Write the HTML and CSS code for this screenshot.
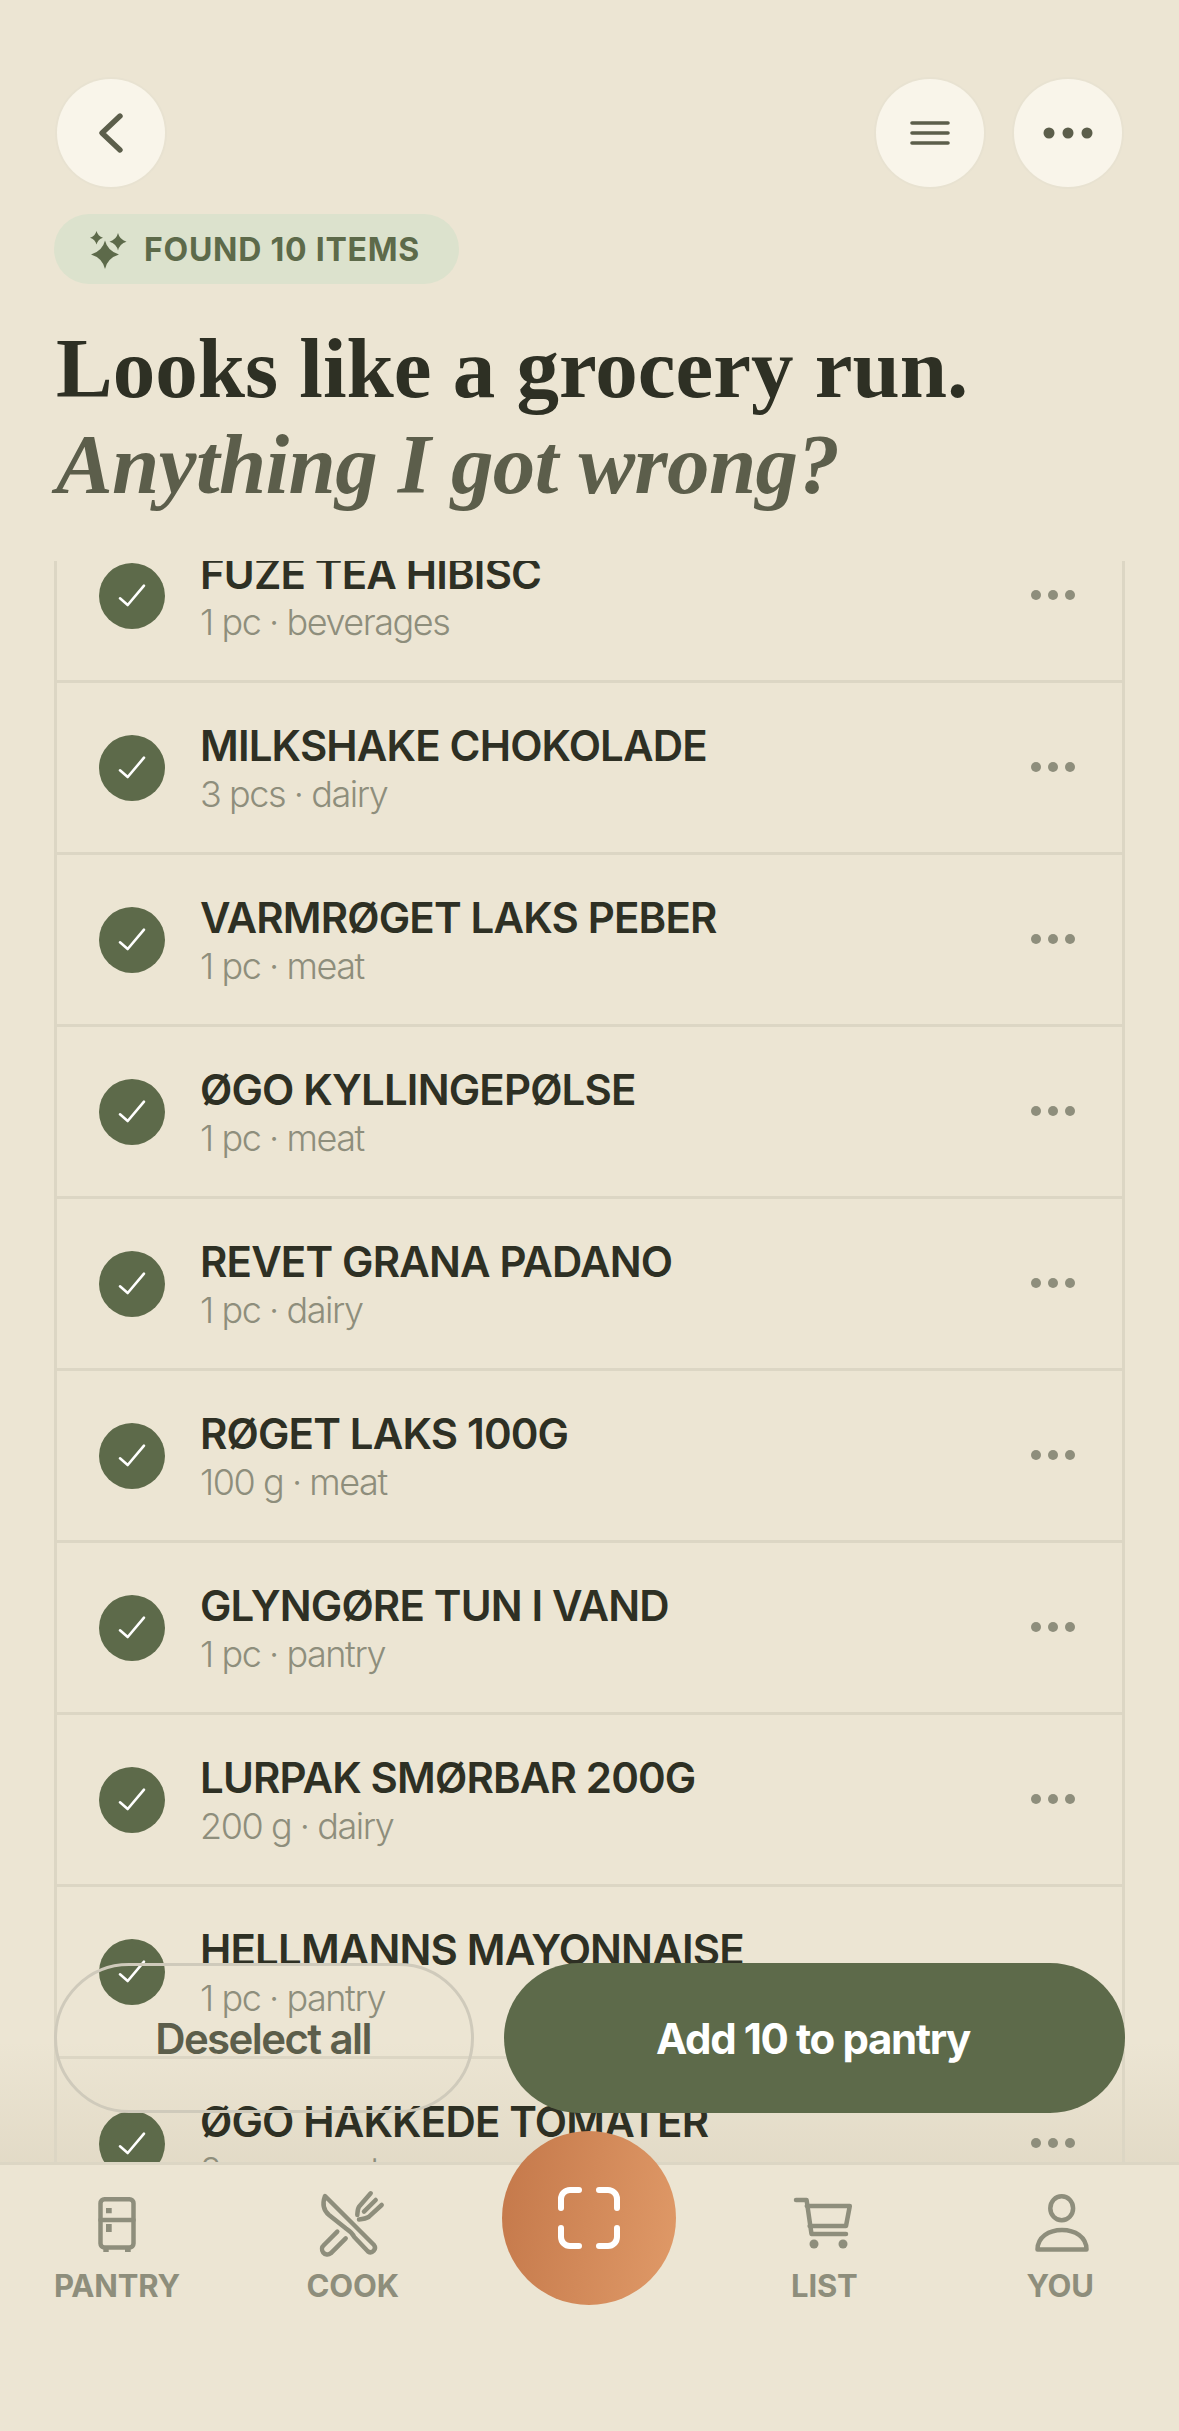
FILE: index.html
```html
<!DOCTYPE html>
<html lang="en">
<head>
<meta charset="utf-8">
<title>Found items</title>
<link rel="stylesheet" href="styles.css">
</head>
<body>
<div class="app">
  <header class="head">
    <div class="topbar">
      <button class="round"><svg class="round-ic" viewBox="0 0 108 108"><path d="M63 37 45 54 63 71" class="ic-stroke"/></svg></button>
      <div class="top-right">
        <button class="round"><svg class="round-ic" viewBox="0 0 108 108"><path d="M36 44H72M36 54H72M36 64H72" class="ic-thin"/></svg></button>
        <button class="round"><svg class="round-ic" viewBox="0 0 108 108"><circle cx="35" cy="54" r="5.5" class="ic-fill"/><circle cx="54" cy="54" r="5.5" class="ic-fill"/><circle cx="73" cy="54" r="5.5" class="ic-fill"/></svg></button>
      </div>
    </div>
    <div class="badge">
      <svg class="badge-ic" viewBox="0 0 40 40"><path d="M17 11.500Q19.500 22 31 25.500 19.500 29 17 40 14.500 29 3 25.500 14.500 22 17 11.500Z" class="spark"/><path d="M8.500 2Q9.800 7 15 8.700 9.800 10.400 8.500 15.400 7.200 10.400 2 8.700 7.200 7 8.500 2Z" class="spark"/><path d="M30 4Q31.500 10.500 38.500 12.700 31.500 14.900 30 21.500 28.500 14.900 21.500 12.700 28.500 10.500 30 4Z" class="spark"/></svg>
      <span>FOUND 10 ITEMS</span>
    </div>
    <h1 class="title">Looks like a grocery run.<em class="title-em">Anything I got wrong?</em></h1>
  </header>

  <main class="main">
    <div class="fade"></div>
    <div class="clip">
      <ul class="list">
        <li class="row"><span class="check"><svg viewBox="0 0 66 66"><path d="M21 35.300 28.700 42 45 22.700"/></svg></span><div class="info"><div class="name">FUZE TEA HIBISC</div><div class="sub">1 pc · beverages</div></div><span class="more"><i></i><i></i><i></i></span></li>
        <li class="row"><span class="check"><svg viewBox="0 0 66 66"><path d="M21 35.300 28.700 42 45 22.700"/></svg></span><div class="info"><div class="name">MILKSHAKE CHOKOLADE</div><div class="sub">3 pcs · dairy</div></div><span class="more"><i></i><i></i><i></i></span></li>
        <li class="row"><span class="check"><svg viewBox="0 0 66 66"><path d="M21 35.300 28.700 42 45 22.700"/></svg></span><div class="info"><div class="name">VARMRØGET LAKS PEBER</div><div class="sub">1 pc · meat</div></div><span class="more"><i></i><i></i><i></i></span></li>
        <li class="row"><span class="check"><svg viewBox="0 0 66 66"><path d="M21 35.300 28.700 42 45 22.700"/></svg></span><div class="info"><div class="name">ØGO KYLLINGEPØLSE</div><div class="sub">1 pc · meat</div></div><span class="more"><i></i><i></i><i></i></span></li>
        <li class="row"><span class="check"><svg viewBox="0 0 66 66"><path d="M21 35.300 28.700 42 45 22.700"/></svg></span><div class="info"><div class="name">REVET GRANA PADANO</div><div class="sub">1 pc · dairy</div></div><span class="more"><i></i><i></i><i></i></span></li>
        <li class="row"><span class="check"><svg viewBox="0 0 66 66"><path d="M21 35.300 28.700 42 45 22.700"/></svg></span><div class="info"><div class="name">RØGET LAKS 100G</div><div class="sub">100 g · meat</div></div><span class="more"><i></i><i></i><i></i></span></li>
        <li class="row"><span class="check"><svg viewBox="0 0 66 66"><path d="M21 35.300 28.700 42 45 22.700"/></svg></span><div class="info"><div class="name">GLYNGØRE TUN I VAND</div><div class="sub">1 pc · pantry</div></div><span class="more"><i></i><i></i><i></i></span></li>
        <li class="row"><span class="check"><svg viewBox="0 0 66 66"><path d="M21 35.300 28.700 42 45 22.700"/></svg></span><div class="info"><div class="name">LURPAK SMØRBAR 200G</div><div class="sub">200 g · dairy</div></div><span class="more"><i></i><i></i><i></i></span></li>
        <li class="row"><span class="check"><svg viewBox="0 0 66 66"><path d="M21 35.300 28.700 42 45 22.700"/></svg></span><div class="info"><div class="name">HELLMANNS MAYONNAISE</div><div class="sub">1 pc · pantry</div></div><span class="more"><i></i><i></i><i></i></span></li>
        <li class="row"><span class="check"><svg viewBox="0 0 66 66"><path d="M21 35.300 28.700 42 45 22.700"/></svg></span><div class="info"><div class="name">ØGO HAKKEDE TOMATER</div><div class="sub">2 pcs · pantry</div></div><span class="more"><i></i><i></i><i></i></span></li>
      </ul>
    </div>
    <div class="actions">
      <button class="btn btn-ghost">Deselect all</button>
      <button class="btn btn-primary">Add 10 to pantry</button>
    </div>
  </main>

  <nav class="nav">
    <div class="tab">
      <svg class="tab-ic" viewBox="0 0 78 78"><rect x="22.500" y="15.200" width="33" height="48.300" rx="4" class="ln"/><path d="M22.500 36H55.500" class="ln"/><path d="M28 24h5.700v5.300H28zM28 40h5.700v8H28zM25.300 65h5.400v3h-5.400zM47 65h5.700v3H47z" class="tab-fill"/></svg>
      <span class="tab-label">PANTRY</span>
    </div>
    <div class="tab">
      <svg class="tab-ic" viewBox="0 0 78 78"><path d="M11 12 60 61A4.500 4.500 0 0 1 54 67.500L40 52.700C38 48 35 46.500 31.700 44.300L15 31C9 26 8.500 19 11 12Z" class="ln"/><path d="M23.300 47.700 10 61A4.700 4.700 0 0 0 16.700 69.300L31.700 54.300" class="ln"/><path d="M56.700 9.300 45 22.700C43.500 25 43.500 28 43.300 31M61.700 16 50 27.700M67.700 21 55 32.700C52 34.500 49 35 45 35.500" class="ln"/></svg>
      <span class="tab-label">COOK</span>
    </div>
    <div class="tab tab-fab">
      <button class="fab"><svg class="fab-ic" viewBox="0 0 72 72"><path d="M8 26V17a9 9 0 0 1 9-9h9M46 8h9a9 9 0 0 1 9 9v9M64 46v9a9 9 0 0 1-9 9h-9M26 64h-9a9 9 0 0 1-9-9v-9"/></svg></button>
    </div>
    <div class="tab">
      <svg class="tab-ic" viewBox="0 0 78 78"><path d="M11 16H21.600L26.500 50H61M21.800 22H64.800L61 42H24.600" class="ln"/><circle cx="29" cy="60" r="4.500" class="tab-fill"/><circle cx="58" cy="60" r="4.500" class="tab-fill"/></svg>
      <span class="tab-label">LIST</span>
    </div>
    <div class="tab">
      <svg class="tab-ic" viewBox="0 0 78 78"><ellipse cx="40.700" cy="24.300" rx="11.400" ry="12" class="ln"/><path d="M16.500 65.500C16.500 53 28 46 41 46S65.500 53 65.500 65.500Z" class="ln"/></svg>
      <span class="tab-label">YOU</span>
    </div>
  </nav>
</div>
</body>
</html>
```
FILE: styles.css
```css
* { box-sizing: border-box; margin: 0; padding: 0; }
html, body { width: 1179px; height: 2431px; overflow: hidden; }
body { background: #ece5d3; font-family: Inter, "Liberation Sans", sans-serif; color: #2e3024; }
.app { width: 1179px; height: 2431px; display: flex; flex-direction: column; }

.head { padding: 79px 57px 0 54px; height: 561px; flex: none; }
.topbar { display: flex; justify-content: space-between; padding-left: 3px; }
.top-right { display: flex; gap: 30px; }
.round { width: 108px; height: 108px; border-radius: 50%; background: #f9f5ea; border: 0; box-shadow: 0 0 0 2px #e8e2d1; display: flex; }
.round-ic { width: 108px; height: 108px; }
.ic-stroke { fill: none; stroke: #5c5e4b; stroke-width: 5.4; stroke-linecap: round; stroke-linejoin: round; }
.ic-thin { fill: none; stroke: #5c5e4b; stroke-width: 3.6; stroke-linecap: round; }
.ic-fill { fill: #5c5e4b; }

.badge { margin-top: 27px; height: 70px; width: 405px; border-radius: 35px; background: #dce2cd; display: flex; align-items: center; gap: 16px; padding-left: 34px; color: #5d6a4a; font-size: 32px; font-weight: 700; letter-spacing: 0.75px; }
.badge-ic { width: 40px; height: 40px; flex: none; }
.spark { fill: #5d6a4a; }

.title { margin-top: 36px; padding-left: 2px; font-family: "Liberation Serif", serif; font-weight: 700; font-size: 85px; line-height: 96px; color: #2e3024; }
.title-em { display: block; font-style: italic; color: #5c5e4b; letter-spacing: -0.6px; }

.main { flex: 1; min-height: 0; position: relative; }
.fade { position: absolute; left: 0; right: 0; bottom: 0; height: 120px; background: linear-gradient(to bottom, rgba(224,216,196,0), rgba(224,216,196,0.8)); }
.clip { position: relative; height: 100%; margin: 0 54px; overflow: hidden; border-left: 3px solid #dcd6c4; border-right: 3px solid #dcd6c4; }
.list { list-style: none; margin-top: -50px; }
.row { height: 172px; border-bottom: 3px solid #dcd6c4; display: flex; align-items: center; padding: 0 47px 0 42px; }
.check { width: 66px; height: 66px; border-radius: 50%; background: #5d6a4a; flex: none; display: flex; }
.check svg { width: 66px; height: 66px; fill: none; stroke: #fff; stroke-width: 2.6; stroke-linecap: round; stroke-linejoin: round; }
.info { flex: 1; margin-left: 35px; min-width: 0; padding-top: 3px; }
.name { font-size: 42px; line-height: 50px; font-weight: 600; letter-spacing: -0.84px; color: #2e3024; white-space: nowrap; }
.sub { font-size: 36px; line-height: 46px; font-weight: 300; color: #8e8e7c; letter-spacing: -1.44px; white-space: nowrap; }
.more { display: flex; gap: 7px; flex: none; padding-bottom: 2px; }
.more i { width: 10px; height: 10px; border-radius: 50%; background: #8e8e7c; }

.actions { position: absolute; left: 54px; right: 54px; bottom: 49px; display: flex; gap: 30px; }
.btn { height: 150px; border-radius: 75px; font-family: Inter, "Liberation Sans", sans-serif; font-size: 42px; }
.btn-ghost { width: 420px; background: transparent; border: 3px solid #cfcabb; color: #5c5e4b; font-weight: 600; letter-spacing: -1.6px; padding-right: 2px; }
.btn-primary { flex: 1; background: #5d6a4a; border: 0; color: #fff; font-weight: 700; letter-spacing: -1.4px; padding-right: 3px; }

.nav { flex: none; height: 269px; border-top: 3px solid #dcd6c4; display: grid; grid-template-columns: repeat(5, 1fr); background: #ece5d3; padding-top: 19px; position: relative; }
.tab { display: flex; flex-direction: column; align-items: center; padding-right: 2px; }
.tab-fab { padding-right: 0; }
.tab-ic { width: 78px; height: 78px; }
.ln { fill: none; stroke: #8e8e7c; stroke-width: 4.5; stroke-linecap: round; stroke-linejoin: round; }
.tab-fill { fill: #8e8e7c; }
.tab-label { margin-top: 4px; font-size: 31px; line-height: 40px; font-weight: 700; color: #8e8e7c; letter-spacing: -0.2px; }
.fab { width: 174px; height: 174px; border-radius: 50%; border: 0; margin-top: -53px; background: linear-gradient(100deg, #c4784a, #e09a68); display: flex; align-items: center; justify-content: center; }
.fab-ic { width: 72px; height: 72px; fill: none; stroke: #fff; stroke-width: 6; stroke-linecap: round; }
```
